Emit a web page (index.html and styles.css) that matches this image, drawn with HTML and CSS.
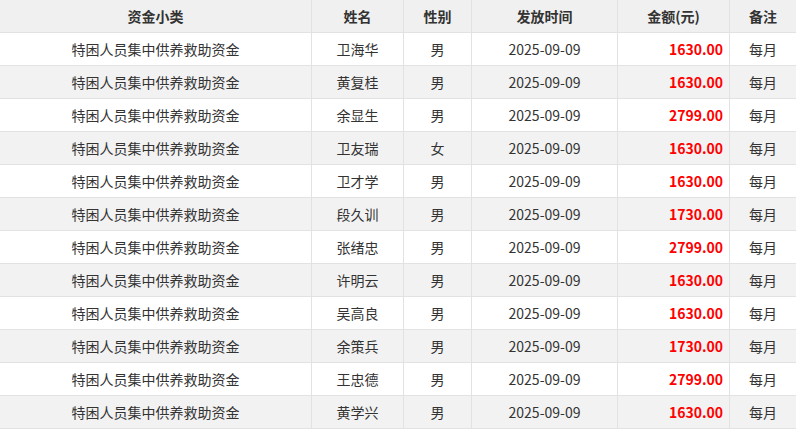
FILE: index.html
```html
<!DOCTYPE html>
<html lang="zh">
<head>
<meta charset="utf-8">
<link rel="stylesheet" href="styles.css">
</head>
<body>
<table class="grid">
  <colgroup>
    <col class="c1"><col class="c2"><col class="c3"><col class="c4"><col class="c5"><col class="c6">
  </colgroup>
  <thead>
    <tr><th>资金小类</th><th>姓名</th><th>性别</th><th>发放时间</th><th>金额(元)</th><th>备注</th></tr>
  </thead>
  <tbody>
    <tr><td>特困人员集中供养救助资金</td><td>卫海华</td><td>男</td><td>2025-09-09</td><td class="amt">1630.00</td><td>每月</td></tr>
    <tr><td>特困人员集中供养救助资金</td><td>黄复桂</td><td>男</td><td>2025-09-09</td><td class="amt">1630.00</td><td>每月</td></tr>
    <tr><td>特困人员集中供养救助资金</td><td>余显生</td><td>男</td><td>2025-09-09</td><td class="amt">2799.00</td><td>每月</td></tr>
    <tr><td>特困人员集中供养救助资金</td><td>卫友瑞</td><td>女</td><td>2025-09-09</td><td class="amt">1630.00</td><td>每月</td></tr>
    <tr><td>特困人员集中供养救助资金</td><td>卫才学</td><td>男</td><td>2025-09-09</td><td class="amt">1630.00</td><td>每月</td></tr>
    <tr><td>特困人员集中供养救助资金</td><td>段久训</td><td>男</td><td>2025-09-09</td><td class="amt">1730.00</td><td>每月</td></tr>
    <tr><td>特困人员集中供养救助资金</td><td>张绪忠</td><td>男</td><td>2025-09-09</td><td class="amt">2799.00</td><td>每月</td></tr>
    <tr><td>特困人员集中供养救助资金</td><td>许明云</td><td>男</td><td>2025-09-09</td><td class="amt">1630.00</td><td>每月</td></tr>
    <tr><td>特困人员集中供养救助资金</td><td>吴高良</td><td>男</td><td>2025-09-09</td><td class="amt">1630.00</td><td>每月</td></tr>
    <tr><td>特困人员集中供养救助资金</td><td>余策兵</td><td>男</td><td>2025-09-09</td><td class="amt">1730.00</td><td>每月</td></tr>
    <tr><td>特困人员集中供养救助资金</td><td>王忠德</td><td>男</td><td>2025-09-09</td><td class="amt">2799.00</td><td>每月</td></tr>
    <tr><td>特困人员集中供养救助资金</td><td>黄学兴</td><td>男</td><td>2025-09-09</td><td class="amt">1630.00</td><td>每月</td></tr>
  </tbody>
</table>
</body>
</html>
```
FILE: styles.css
```css
html, body {
  margin: 0;
  padding: 0;
  background: #fff;
}
.grid {
  width: 796px;
  border-collapse: separate;
  border-spacing: 0;
  table-layout: fixed;
  font-family: "Noto Sans CJK SC", "Noto Sans", sans-serif;
  font-size: 14px;
  color: #333;
}
.c1 { width: 312px; }
.c2 { width: 92px; }
.c3 { width: 68px; }
.c4 { width: 146px; }
.c5 { width: 112px; }
.c6 { width: 66px; }
.grid th, .grid td {
  height: 32px;
  padding: 0;
  text-align: center;
  vertical-align: middle;
  border-right: 1px solid #e2e2e2;
  border-bottom: 1px solid #e2e2e2;
  line-height: 20px;
  white-space: nowrap;
}
.grid th:last-child, .grid td:last-child {
  border-right: none;
}
.grid th {
  background: #f0f0f0;
  font-weight: bold;
}
.grid tbody tr:nth-child(even) td {
  background: #f2f2f2;
}
.grid td.amt {
  text-align: right;
  padding-right: 6px;
  color: #ff0000;
  font-weight: bold;
}
```
